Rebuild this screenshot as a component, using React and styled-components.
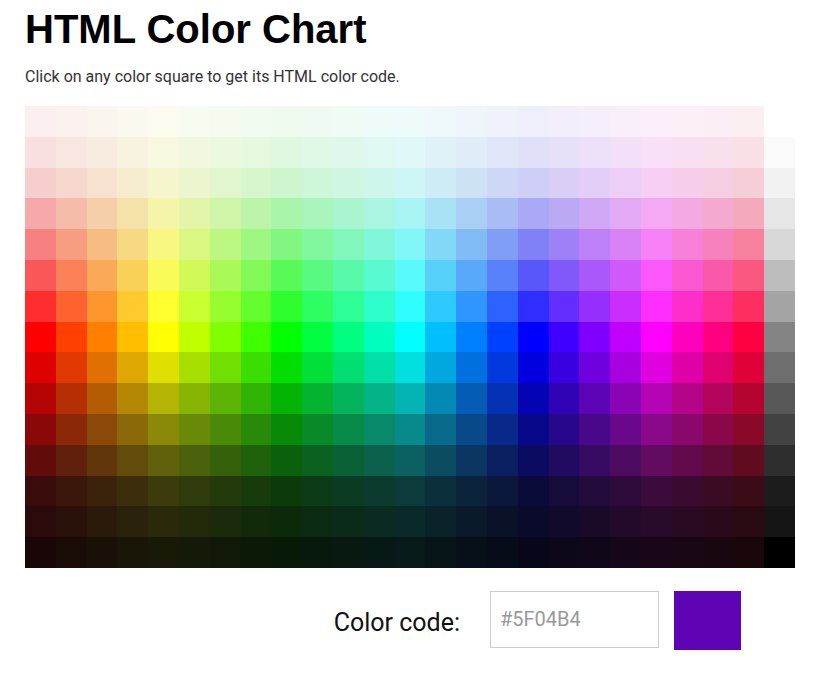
import React from "react";
import styled, { createGlobalStyle } from "styled-components";

// saturation / lightness per row, same for every hue column
const rows = [
  [60, 96.1],
  [63, 92.5],
  [69, 88.6],
  [79, 81.2],
  [88, 73.7],
  [94, 66.3],
  [99, 58.8],
  [100, 50],
  [99, 43.9],
  [96, 36.1],
  [89, 28.6],
  [80, 21.2],
  [69, 13.7],
  [62, 10.2],
  [56, 6.3],
];

const grays = [
  "#FFFFFF",
  "#FAFAFA",
  "#F2F2F2",
  "#E6E6E6",
  "#D8D8D8",
  "#BDBDBD",
  "#A4A4A4",
  "#848484",
  "#6E6E6E",
  "#585858",
  "#424242",
  "#2E2E2E",
  "#1C1C1C",
  "#151515",
  "#000000",
];

const hues = Array.from({ length: 24 }, (_, i) => i * 15);

export default function App() {
  const [code, setCode] = React.useState("#5F04B4");

  return (
    <>
      <GlobalStyle />
      <Page>
        <Title>HTML Color Chart</Title>
        <Intro>Click on any color square to get its HTML color code.</Intro>
        <Chart>
          {rows.map(([s, l], r) => (
            <React.Fragment key={r}>
              {hues.map((h) => (
                <Cell
                  key={h}
                  $color={`hsl(${h}, ${s}%, ${l}%)`}
                  onClick={() => setCode(`hsl(${h}, ${s}%, ${l}%)`)}
                />
              ))}
              <Cell $color={grays[r]} onClick={() => setCode(grays[r])} />
            </React.Fragment>
          ))}
        </Chart>
        <CodeRow>
          <Label>Color code:</Label>
          <CodeInput placeholder={code.startsWith("#") ? code : "#5F04B4"} readOnly />
          <Swatch $color={code} />
        </CodeRow>
      </Page>
    </>
  );
}

const GlobalStyle = createGlobalStyle`
  body {
    margin: 0;
    background: #ffffff;
    font-family: Roboto, "Liberation Sans", sans-serif;
  }
`;

const Page = styled.div`
  width: 770px;
  padding: 5px 25px 30px;
`;

const Title = styled.h1`
  margin: 0;
  font-family: "Liberation Sans", Arial, sans-serif;
  font-weight: 700;
  font-size: 40px;
  line-height: 48px;
  color: #000;
`;

const Intro = styled.p`
  margin: 14px 0 0;
  font-size: 16px;
  line-height: 20px;
  color: #333;
`;

const Chart = styled.div`
  margin-top: 19px;
  display: grid;
  grid-template-columns: repeat(25, 1fr);
  grid-auto-rows: 30.8px;
`;

const Cell = styled.div.attrs((p) => ({ style: { background: p.$color } }))`
  cursor: pointer;
`;

const CodeRow = styled.div`
  margin-top: 23px;
  padding-right: 54px;
  display: flex;
  justify-content: flex-end;
  align-items: flex-start;
`;

const Label = styled.span`
  margin: 3px 30px 0 0;
  font-size: 25px;
  line-height: 57px;
  color: #111;
`;

const CodeInput = styled.input`
  box-sizing: border-box;
  width: 169px;
  height: 57px;
  margin: 0 15px 0 0;
  padding: 0 9px;
  border: 1px solid #cccccc;
  font-family: Roboto, sans-serif;
  font-size: 20px;
  color: #333;
  outline: none;
  &::placeholder {
    color: #999;
  }
`;

const Swatch = styled.div.attrs((p) => ({ style: { background: p.$color } }))`
  width: 67px;
  height: 59px;
`;
